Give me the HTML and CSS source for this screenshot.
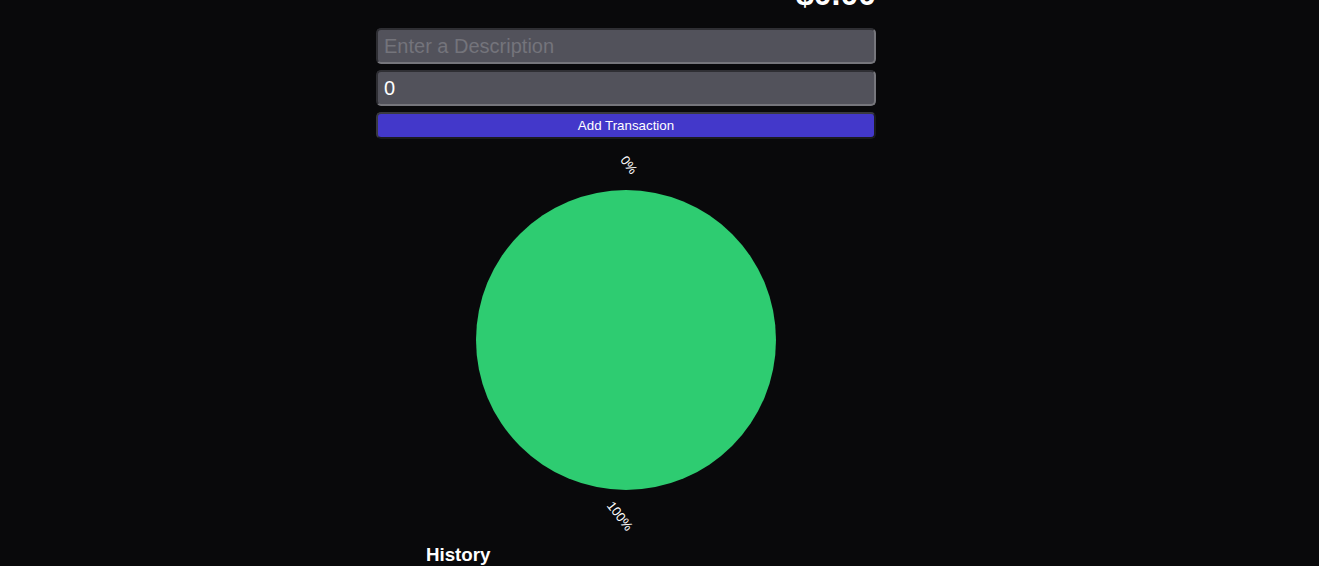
FILE: index.html
```html
<!DOCTYPE html>
<html lang="en">
<head>
<meta charset="utf-8">
<title>Expense Tracker</title>
<link rel="stylesheet" href="styles.css">
</head>
<body>
<main class="app">
  <h1 class="balance">$0.00</h1>
  <form class="form">
    <input class="field" type="text" placeholder="Enter a Description">
    <input class="field" type="number" value="0">
    <button class="add-btn" type="button">Add Transaction</button>
  </form>
  <div class="chart">
    <svg width="500" height="400" viewBox="0 0 500 400">
      <circle cx="250" cy="200" r="150" fill="#2ecc71"/>
      <text class="pie-label" x="0" y="0" transform="translate(253 25) rotate(52)" text-anchor="middle" dominant-baseline="central">0%</text>
      <text class="pie-label" x="0" y="0" transform="translate(244 376) rotate(52)" text-anchor="middle" dominant-baseline="central">100%</text>
    </svg>
  </div>
  <section class="history">
    <h3 class="history-title">History</h3>
  </section>
</main>
</body>
</html>
```

FILE: styles.css
```css
html, body {
  margin: 0;
  padding: 0;
  background: #09090b;
  color: #ffffff;
  font-family: "Liberation Sans", Arial, sans-serif;
  overflow: hidden;
}

body {
  padding-right: 67px;
}

.app {
  width: 500px;
  margin: 0 auto;
  display: flex;
  flex-direction: column;
  align-items: stretch;
}

.balance {
  margin: -24px 0 15px;
  font-size: 32px;
  line-height: 37px;
  font-weight: bold;
  text-align: right;
}

.form {
  display: flex;
  flex-direction: column;
  gap: 6px;
  margin: 0;
}

.field {
  box-sizing: border-box;
  width: 100%;
  height: 36px;
  margin: 0;
  padding: 0 6px;
  background: #52525b;
  color: #ffffff;
  border: 2px solid;
  border-color: #2f2f34 #76767c #76767c #2f2f34;
  border-radius: 5px;
  font-family: "Liberation Sans", Arial, sans-serif;
  font-size: 20px;
  outline: none;
  -moz-appearance: textfield;
}

.field::-webkit-outer-spin-button,
.field::-webkit-inner-spin-button {
  -webkit-appearance: none;
  margin: 0;
}

.field::placeholder {
  color: #74747b;
}

.add-btn {
  box-sizing: border-box;
  width: 100%;
  height: 27px;
  margin: 0;
  padding: 0;
  background: #4338ca;
  color: #ffffff;
  border: 2px solid;
  border-color: #3a3a40 #1b1b1f #1b1b1f #3a3a40;
  border-radius: 5px;
  font-family: "Liberation Sans", Arial, sans-serif;
  font-size: 13.33px;
  cursor: pointer;
}

.chart {
  height: 400px;
  margin-top: 1px;
}

.chart svg {
  display: block;
}

.pie-label {
  fill: #ffffff;
  font-family: "Liberation Sans", Arial, sans-serif;
  font-size: 13px;
}

.history {
  width: 400px;
  margin: 4px auto 0;
}

.history-title {
  margin: 0;
  font-size: 18.72px;
  font-weight: bold;
}
```
